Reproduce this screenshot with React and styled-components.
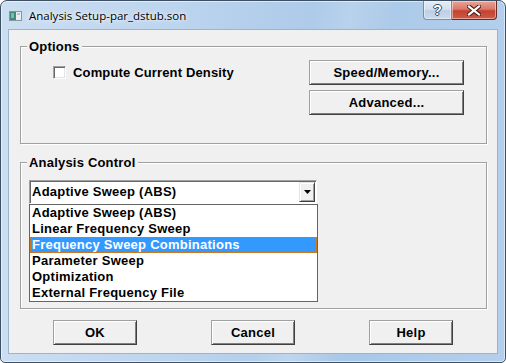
import React from "react";
import styled, { createGlobalStyle } from "styled-components";

const Global = createGlobalStyle`
  html, body { margin: 0; padding: 0; background: #ffffff; }
  body { font-family: "Liberation Sans", Arial, sans-serif; }
`;

const Window = styled.div`
  width: 506px;
  height: 363px;
  box-sizing: border-box;
  display: flex;
  flex-direction: column;
  padding: 0 7px 8px 7px;
  border: 1px solid #3d4f63;
  border-radius: 7px 7px 5px 5px;
  background:
    linear-gradient(100deg, rgba(255,255,255,0) 55%, rgba(255,255,255,0.18) 62%, rgba(255,255,255,0) 70%),
    linear-gradient(to right, #cbdef2 0%, #bcd4ee 35%, #a9c8e8 70%, #b3cfec 100%);
  box-shadow: inset 0 0 0 1px rgba(255,255,255,0.55);
  overflow: hidden;
`;

const TitleBar = styled.div`
  height: 28px;
  display: flex;
  align-items: flex-start;
  flex-shrink: 0;
`;

const AppIcon = styled.svg`
  margin: 10px 0 0 1px;
  flex-shrink: 0;
`;

const TitleText = styled.div`
  margin: 7px 0 0 7px;
  font-family: "Open Sans", "Noto Sans", sans-serif;
  font-size: 11.5px;
  line-height: 16px;
  color: #000;
  text-shadow: 0 0 6px rgba(255,255,255,0.9), 0 0 3px rgba(255,255,255,0.9);
  flex: 1;
  white-space: nowrap;
`;

const CaptionGroup = styled.div`
  display: flex;
  margin-right: 1px;
`;

const CaptionButton = styled.div`
  width: ${(p) => p.$w}px;
  height: 19px;
  box-sizing: border-box;
  display: flex;
  align-items: center;
  justify-content: center;
  border: 1px solid ${(p) => (p.$close ? "#6b2a22" : "#7d8da0")};
  border-top: none;
  border-left: ${(p) => (p.$close ? "none" : undefined)};
  border-radius: ${(p) => (p.$close ? "0 0 4px 0" : "0 0 0 4px")};
  background: ${(p) =>
    p.$close
      ? "linear-gradient(to bottom, #e8a597 0%, #d9786a 45%, #c5412f 55%, #cf5b45 100%)"
      : "linear-gradient(to bottom, #e4ecf6 0%, #d3e0ef 45%, #bccfe5 55%, #c9daee 100%)"};
  box-shadow: inset 0 0 0 1px rgba(255,255,255,0.45);
`;

const HelpGlyph = styled.span`
  font-family: "Liberation Sans", Arial, sans-serif;
  font-weight: bold;
  font-size: 14px;
  line-height: 14px;
  color: #ffffff;
  text-shadow: 1px 0 0 #3b4a5c, -1px 0 0 #3b4a5c, 0 1px 0 #3b4a5c, 0 -1px 0 #3b4a5c;
`;

const Client = styled.div`
  flex: 1;
  display: flex;
  flex-direction: column;
  background: #f0f0f0;
  border: 1px solid #9db3cb;
  padding: 16px 10px 0 11px;
  font-family: "Liberation Sans", Arial, sans-serif;
  font-weight: bold;
  font-size: 13px;
  letter-spacing: 0.2px;
  color: #000;
`;

const Group = styled.div`
  box-sizing: border-box;
  height: ${(p) => p.$h}px;
  margin-top: ${(p) => p.$mt || 0}px;
  border: 1px solid #a0a0a0;
  box-shadow: inset 1px 1px 0 #ffffff, 1px 1px 0 #ffffff;
  display: flex;
  flex-direction: column;
`;

const Legend = styled.div`
  align-self: flex-start;
  margin: -8px 0 0 6px;
  padding: 0 2px;
  line-height: 15px;
  background: #f0f0f0;
`;

const OptionsBody = styled.div`
  display: flex;
  justify-content: space-between;
  padding: 6px 22px 0 32px;
`;

const CheckRow = styled.label`
  display: flex;
  align-items: center;
  height: 25px;
`;

const CheckBox = styled.span`
  width: 13px;
  height: 13px;
  box-sizing: border-box;
  background: #ffffff;
  border: 1px solid;
  border-color: #a0a0a0 #ffffff #ffffff #a0a0a0;
  box-shadow: inset 1px 1px 0 #696969, inset -1px -1px 0 #e3e3e3;
`;

const CheckLabel = styled.span`
  margin-left: 7px;
  letter-spacing: 0.15px;
`;

const ButtonColumn = styled.div`
  display: flex;
  flex-direction: column;
  gap: 5px;
`;

const Button = styled.button`
  width: ${(p) => p.$w}px;
  height: 25px;
  box-sizing: border-box;
  padding: 0;
  font: inherit;
  letter-spacing: 0.25px;
  color: #000;
  background: #f0f0f0;
  border: 1px solid;
  border-color: #a0a0a0 #404040 #404040 #a0a0a0;
  box-shadow: inset 1px 1px 0 #ffffff, inset -1px -1px 0 #808080;
`;

const ControlBody = styled.div`
  display: flex;
  flex-direction: column;
  padding: 10px 0 0 8px;
`;

const Combo = styled.div`
  width: 288px;
  height: 24px;
  box-sizing: border-box;
  display: flex;
  background: #ffffff;
  border: 1px solid;
  border-color: #a0a0a0 #ffffff #ffffff #a0a0a0;
  padding: 1px;
  box-shadow: inset 2px 2px 0 -1px #696969;
`;

const ComboText = styled.div`
  flex: 1;
  padding-left: 1px;
  line-height: 20px;
  letter-spacing: 0.25px;
`;

const DropButton = styled.div`
  width: 16px;
  height: 20px;
  box-sizing: border-box;
  display: flex;
  align-items: center;
  justify-content: center;
  background: #f0f0f0;
  border: 1px solid;
  border-color: #e3e3e3 #404040 #404040 #e3e3e3;
  box-shadow: inset 1px 1px 0 #ffffff, inset -1px -1px 0 #a0a0a0;
`;

const List = styled.div`
  width: 289px;
  box-sizing: border-box;
  border: 1px solid #646464;
  background: #ffffff;
`;

const Item = styled.div`
  height: 16px;
  line-height: 16px;
  padding-left: 2px;
  letter-spacing: 0.25px;
  white-space: nowrap;
  background: ${(p) => (p.$selected ? "#3399ff" : "transparent")};
  color: ${(p) => (p.$selected ? "#ffffff" : "#000000")};
  outline: ${(p) => (p.$selected ? "1px dotted #cc7a22" : "none")};
  outline-offset: -1px;
`;

const ButtonRow = styled.div`
  display: flex;
  gap: 74px;
  padding-left: 33px;
  margin-top: 11px;
`;

const items = [
  "Adaptive Sweep (ABS)",
  "Linear Frequency Sweep",
  "Frequency Sweep Combinations",
  "Parameter Sweep",
  "Optimization",
  "External Frequency File",
];

export default function App() {
  return (
    <>
      <Global />
      <Window>
        <TitleBar>
          <AppIcon width="13" height="10" viewBox="0 0 13 10">
            <rect x="0.5" y="0.5" width="12" height="9" fill="#e8eef2" stroke="#8a949c" />
            <rect x="1" y="1" width="6" height="8" fill="#3f8a7c" />
            <rect x="2" y="2" width="3" height="5" fill="#7fb8a8" />
            <rect x="8" y="2" width="3" height="2" fill="#b8c4cc" />
          </AppIcon>
          <TitleText>Analysis Setup-par_dstub.son</TitleText>
          <CaptionGroup>
            <CaptionButton $w={29}>
              <HelpGlyph>?</HelpGlyph>
            </CaptionButton>
            <CaptionButton $w={45} $close>
              <svg width="14" height="11" viewBox="0 0 14 11">
                <path d="M2 1.5 L12 9.5 M12 1.5 L2 9.5" stroke="#4a1d17" strokeWidth="4.2" strokeLinecap="square" />
                <path d="M2 1.5 L12 9.5 M12 1.5 L2 9.5" stroke="#ffffff" strokeWidth="2.2" strokeLinecap="square" />
              </svg>
            </CaptionButton>
          </CaptionGroup>
        </TitleBar>
        <Client>
          <Group $h={98}>
            <Legend>Options</Legend>
            <OptionsBody>
              <CheckRow>
                <CheckBox />
                <CheckLabel>Compute Current Density</CheckLabel>
              </CheckRow>
              <ButtonColumn>
                <Button $w={155}>Speed/Memory...</Button>
                <Button $w={155}>Advanced...</Button>
              </ButtonColumn>
            </OptionsBody>
          </Group>
          <Group $h={147} $mt={18}>
            <Legend>Analysis Control</Legend>
            <ControlBody>
              <Combo>
                <ComboText>Adaptive Sweep (ABS)</ComboText>
                <DropButton>
                  <svg width="7" height="4" viewBox="0 0 7 4">
                    <path d="M0 0 H7 L3.5 4 Z" fill="#000" />
                  </svg>
                </DropButton>
              </Combo>
              <List>
                {items.map((t, i) => (
                  <Item key={t} $selected={i === 2}>
                    {t}
                  </Item>
                ))}
              </List>
            </ControlBody>
          </Group>
          <ButtonRow>
            <Button $w={84}>OK</Button>
            <Button $w={84}>Cancel</Button>
            <Button $w={84}>Help</Button>
          </ButtonRow>
        </Client>
      </Window>
    </>
  );
}
